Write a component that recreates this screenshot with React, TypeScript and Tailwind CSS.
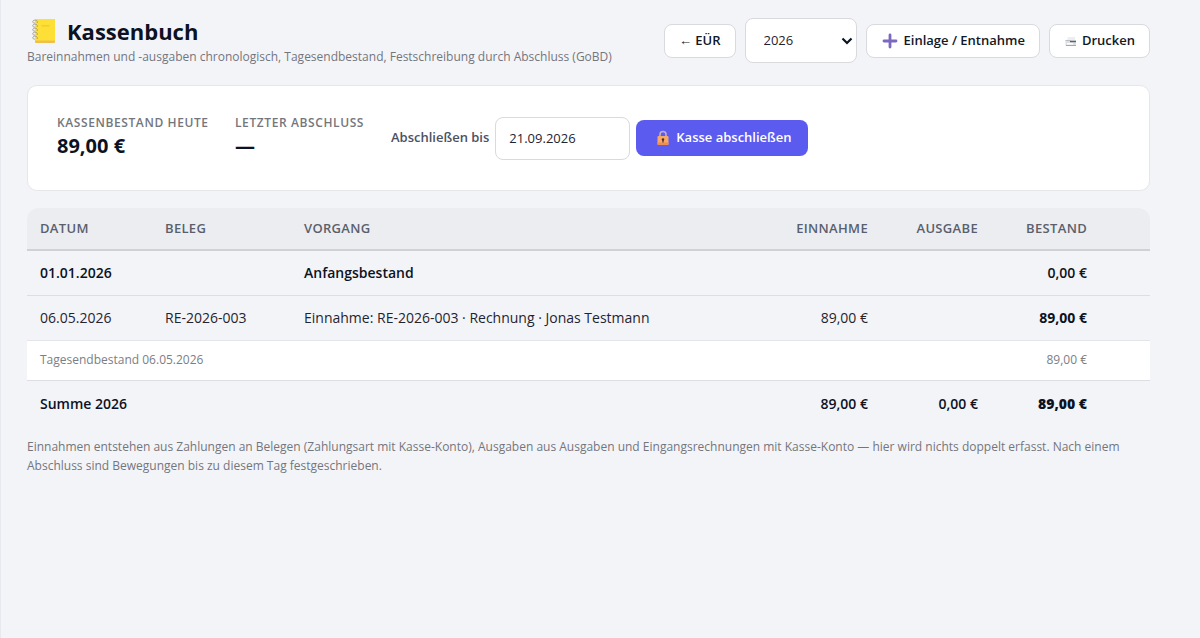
import React, { useState } from 'react';

function NotebookIcon() {
  return (
    <svg width="26" height="26" viewBox="0 0 26 26" className="shrink-0">
      <path d="M4 1h19a1 1 0 0 1 1 1v22a1 1 0 0 1-1 1H5a1 1 0 0 1-1-1z" fill="#eec04a" />
      <path d="M4 1h19a1 1 0 0 1 1 1v20.500H4z" fill="#fddf35" />
      <path d="M10.500 7h8v1.500h-8z" fill="#f6cb2e" />
      {[2, 6, 10, 14, 18].map((y) => (
        <path
          key={y}
          d={`M6 ${y + 3}c1.500-2-1.500-3.500-3.500-2.500c-1.500 1-.5 3 1.500 2.500`}
          fill="none"
          stroke="#a89f80"
          strokeWidth="1"
        />
      ))}
    </svg>
  );
}

function PlusIcon() {
  return (
    <svg width="18" height="16" viewBox="0 0 18 16" className="shrink-0">
      <path d="M9 2v12M3 8h12" stroke="#7d68bf" strokeWidth="2.800" strokeLinecap="round" />
    </svg>
  );
}

function PrinterIcon() {
  return (
    <svg width="13" height="14" viewBox="0 0 13 14" className="shrink-0">
      <path d="M4 3h7v3H3z" fill="#eceef0" />
      <path d="M1.500 6h10.500v5.500H1.500z" fill="#dcdfe3" />
      <path d="M1.500 6.500h5" stroke="#b9bdc3" strokeWidth="1" />
      <path d="M6 7.500h6" stroke="#5e636b" strokeWidth="1.400" />
      <path d="M3 9h6v1.500H3z" fill="#fff" />
      <path d="M2 11.500h10" stroke="#a4a8ae" strokeWidth="1" />
    </svg>
  );
}

function LockIcon() {
  return (
    <svg width="14" height="16" viewBox="0 0 14 16" className="shrink-0">
      <path d="M4 7V4.500a3 3 0 0 1 6 0V7" fill="none" stroke="#c3b4c4" strokeWidth="1.500" />
      <rect x="1.500" y="6" width="11" height="9" rx="1" fill="#f7a866" />
      <path d="M1.500 12.500h11V14a1 1 0 0 1-1 1h-9a1 1 0 0 1-1-1z" fill="#ee8d55" />
      <circle cx="7" cy="9.500" r="1.200" fill="#4a2c2a" />
      <path d="M7 9.500v3" stroke="#4a2c2a" strokeWidth="1.200" />
    </svg>
  );
}

const outline =
  'flex h-[34px] items-center gap-[5px] rounded-lg border border-[#d9dade] bg-white px-[14px] text-[13px] font-semibold text-[#111827] whitespace-nowrap';
const statLabel = 'text-xs font-semibold tracking-wider text-[#73767d] uppercase';
const statValue = 'text-xl leading-[30px] font-bold text-[#0c1222]';
const num = 'text-right whitespace-nowrap';

export default function App() {
  const [year, setYear] = useState('2026');
  const [closeDate, setCloseDate] = useState('21.09.2026');

  return (
    <div className="min-h-screen border-l border-[#e8e9ee] bg-[#f3f4f8] pt-4 pr-[50px] pl-[26px] font-['Open_Sans','Noto_Sans',sans-serif] text-[#1f2430]">
      <header className="flex items-start justify-between">
        <div>
          <h1 className="flex items-center gap-[10px] pl-1 text-[22px] leading-[30px] font-bold text-[#0c1222]">
            <NotebookIcon />
            Kassenbuch
          </h1>
          <p className="text-xs leading-[22px] text-[#73767d]">
            Bareinnahmen und -ausgaben chronologisch, Tagesendbestand, Festschreibung durch Abschluss (GoBD)
          </p>
        </div>
        <div className="flex shrink-0 items-center gap-[9px] pt-[2px]">
          <a href="#euer" className={outline}>← EÜR</a>
          <div className="relative">
            <select
              aria-label="Jahr"
              value={year}
              onChange={(e) => setYear(e.target.value)}
              className="h-[45px] w-[112px] appearance-none rounded-lg border border-[#d9dade] bg-white px-[18px] text-[13px]"
            >
              <option>2026</option>
              <option>2025</option>
            </select>
            <svg width="12" height="8" viewBox="0 0 12 8" className="pointer-events-none absolute top-[19px] right-1">
              <path d="M1.500 1.500L6 6l4.500-4.500" fill="none" stroke="#0c1222" strokeWidth="2.200" />
            </svg>
          </div>
          <button className={outline}>
            <PlusIcon />
            Einlage / Entnahme
          </button>
          <button className={outline}>
            <PrinterIcon />
            Drucken
          </button>
        </div>
      </header>

      <section className="mt-[17px] flex h-[106px] items-center rounded-[10px] border border-[#e6e7ea] bg-white px-[29px]">
        <div className="w-[178px]">
          <div className={statLabel}>Kassenbestand heute</div>
          <div className={statValue}>89,00 €</div>
        </div>
        <div className="w-[156px]">
          <div className={statLabel}>Letzter Abschluss</div>
          <div className={statValue}>—</div>
        </div>
        <form className="flex items-center gap-[6px]" onSubmit={(e) => e.preventDefault()}>
          <label htmlFor="bis" className="text-[13px] font-semibold text-[#4b5160]">Abschließen bis</label>
          <input
            id="bis"
            value={closeDate}
            onChange={(e) => setCloseDate(e.target.value)}
            className="h-[43px] w-[135px] rounded-lg border border-[#d9dade] bg-white px-[13px] text-[13px]"
          />
          <button className="flex h-9 items-center gap-[6px] rounded-lg bg-[#5b5bf0] pr-4 pl-5 text-[13px] font-semibold text-white">
            <LockIcon />
            Kasse abschließen
          </button>
        </form>
      </section>

      <table className="mt-[17px] w-full table-fixed text-sm [&_td]:px-[13px] [&_th]:px-[13px]">
        <colgroup>
          <col className="w-[125px]" />
          <col className="w-[139px]" />
          <col />
          <col className="w-[130px]" />
          <col className="w-[110px]" />
          <col className="w-[109px]" />
          <col className="w-[50px]" />
        </colgroup>
        <thead>
          <tr className="h-[42px] border-b-2 border-[#cfd1d7] text-left text-[13px] tracking-wide text-[#59606c] uppercase [&>th]:bg-[#ecedf1] [&>th]:font-semibold">
            <th className="rounded-tl-xl">Datum</th>
            <th>Beleg</th>
            <th>Vorgang</th>
            <th className={num}>Einnahme</th>
            <th className={num}>Ausgabe</th>
            <th className={num}>Bestand</th>
            <th className="rounded-tr-xl" />
          </tr>
        </thead>
        <tbody>
          <tr className="h-[45px] border-b border-[#dcdee4] font-semibold text-[#0c1222]">
            <td>01.01.2026</td>
            <td />
            <td>Anfangsbestand</td>
            <td />
            <td />
            <td className={num}>0,00 €</td>
            <td />
          </tr>
          <tr className="h-[45px] border-b border-[#e4e5ea]">
            <td>06.05.2026</td>
            <td>RE-2026-003</td>
            <td>Einnahme: RE-2026-003 · Rechnung · Jonas Testmann</td>
            <td className={num}>89,00 €</td>
            <td />
            <td className={num + ' font-bold text-[#0c1222]'}>89,00 €</td>
            <td />
          </tr>
          <tr className="h-10 border-b border-[#dcdee4] bg-white text-xs text-[#7b7e85]">
            <td colSpan={5}>Tagesendbestand 06.05.2026</td>
            <td className={num}>89,00 €</td>
            <td />
          </tr>
        </tbody>
        <tfoot>
          <tr className="h-[47px] font-semibold text-[#0c1222]">
            <td colSpan={3}>Summe 2026</td>
            <td className={num}>89,00 €</td>
            <td className={num}>0,00 €</td>
            <td className={num + ' font-extrabold'}>89,00 €</td>
            <td />
          </tr>
        </tfoot>
      </table>

      <p className="mt-[10px] text-xs leading-[19px] text-[#73767d]">
        Einnahmen entstehen aus Zahlungen an Belegen (Zahlungsart mit Kasse-Konto), Ausgaben aus Ausgaben und
        Eingangsrechnungen mit Kasse-Konto — hier wird nichts doppelt erfasst. Nach einem Abschluss sind Bewegungen bis
        zu diesem Tag festgeschrieben.
      </p>
    </div>
  );
}
